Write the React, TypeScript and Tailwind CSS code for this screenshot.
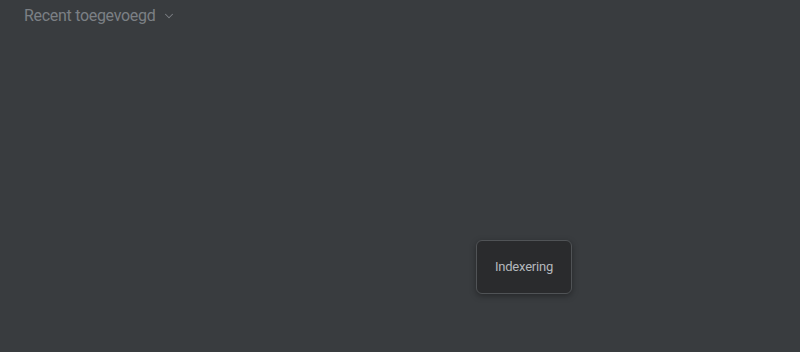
import { ChevronDown } from "lucide-react";

export default function App() {
  return (
    <div className="relative h-[352px] w-[800px] overflow-hidden bg-[#393c3f] font-['Roboto',sans-serif]">
      <div className="flex items-center gap-[7px] px-6 pt-[4px]">
        <span className="text-[16px] leading-[24px] tracking-[-0.3px] text-[#7c8085]">Recent toegevoegd</span>
        <ChevronDown className="h-[14px] w-[14px] text-[#7c8085]" strokeWidth={1.75} />
      </div>

      <div className="absolute left-[476px] top-[240px] flex h-[54px] w-[96px] items-center justify-center rounded-[6px] border border-[#505356] bg-[#2a2b2d] shadow-[0_2px_6px_rgba(0,0,0,0.35)]">
        <span className="text-[13px] tracking-[-0.2px] text-[#b4b8bc]">Indexering</span>
      </div>
    </div>
  );
}
